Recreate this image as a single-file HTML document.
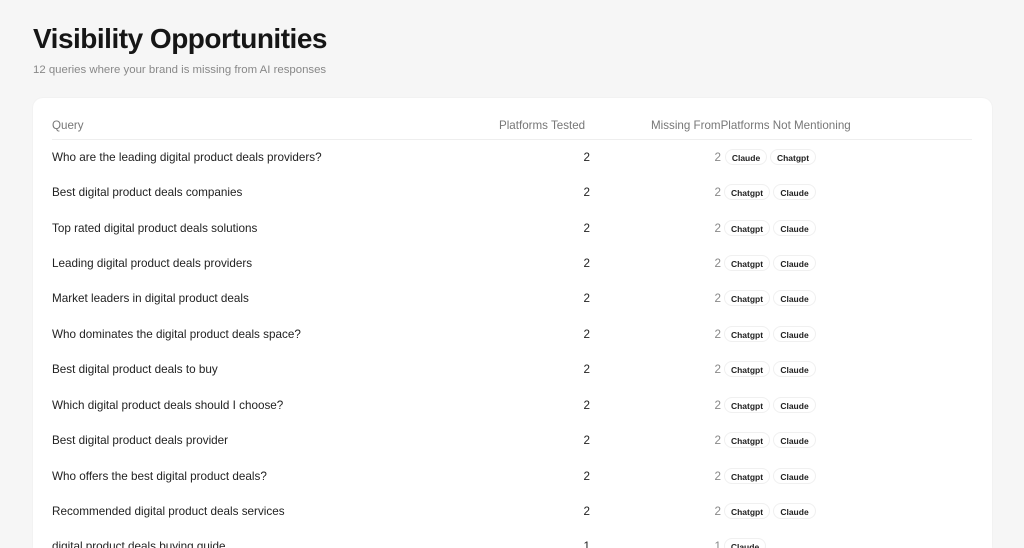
<!DOCTYPE html>
<html style="margin:0;width:1024px;height:548px;overflow:hidden"><head><style>
body{margin:0;width:1024px;height:548px;overflow:hidden;background:#f6f6f6;font-family:"Liberation Sans",sans-serif;color:#222;position:relative}
h1{position:absolute;left:33px;top:23px;margin:0;font-size:28px;font-weight:700;color:#161616;letter-spacing:-0.5px}
.sub{position:absolute;left:33px;top:64px;font-size:11.4px;color:#888}
.card{position:absolute;left:33px;top:98px;width:959px;height:450px;background:#fff;border-radius:10px 10px 0 0;box-shadow:0 0 2px rgba(0,0,0,.05)}
.hd{position:absolute;top:119px;font-size:11.6px;color:#777}
.line{position:absolute;left:52px;width:920px;height:1px;background:#eee}
.row{position:absolute;left:0;width:1024px;height:20px;font-size:11.7px;color:#222}
.q{position:absolute;left:52px;top:2px}
.t{position:absolute;left:540px;width:50px;text-align:right;top:2px}
.m{position:absolute;left:680px;width:41px;text-align:right;top:2px;color:#888}
.p{position:absolute;top:0;height:16px;line-height:16px;font-size:8.5px;font-weight:700;border:1px solid #f0f0f0;border-radius:9px;padding:0 5px;box-sizing:border-box;background:#fff;color:#222;text-align:center}
</style></head><body>
<h1>Visibility Opportunities</h1>
<div class="sub">12 queries where your brand is missing from AI responses</div>
<div class="card"></div>
<div class="hd" style="left:52px">Query</div>
<div class="hd" style="left:499px">Platforms Tested</div>
<div class="hd" style="left:651px">Missing FromPlatforms Not Mentioning</div>
<div class="line" style="top:139px"></div>
<div class="row" style="top:149px"><span class="q">Who are the leading digital product deals providers?</span><span class="t">2</span><span class="m">2</span><span class="p" style="left:725px;width:42px">Claude</span><span class="p" style="left:770px;width:46px">Chatgpt</span></div>
<div class="row" style="top:184px"><span class="q">Best digital product deals companies</span><span class="t">2</span><span class="m">2</span><span class="p" style="left:724px;width:46px">Chatgpt</span><span class="p" style="left:773px;width:43px">Claude</span></div>
<div class="row" style="top:220px"><span class="q">Top rated digital product deals solutions</span><span class="t">2</span><span class="m">2</span><span class="p" style="left:724px;width:46px">Chatgpt</span><span class="p" style="left:773px;width:43px">Claude</span></div>
<div class="row" style="top:255px"><span class="q">Leading digital product deals providers</span><span class="t">2</span><span class="m">2</span><span class="p" style="left:724px;width:46px">Chatgpt</span><span class="p" style="left:773px;width:43px">Claude</span></div>
<div class="row" style="top:290px"><span class="q">Market leaders in digital product deals</span><span class="t">2</span><span class="m">2</span><span class="p" style="left:724px;width:46px">Chatgpt</span><span class="p" style="left:773px;width:43px">Claude</span></div>
<div class="row" style="top:326px"><span class="q">Who dominates the digital product deals space?</span><span class="t">2</span><span class="m">2</span><span class="p" style="left:724px;width:46px">Chatgpt</span><span class="p" style="left:773px;width:43px">Claude</span></div>
<div class="row" style="top:361px"><span class="q">Best digital product deals to buy</span><span class="t">2</span><span class="m">2</span><span class="p" style="left:724px;width:46px">Chatgpt</span><span class="p" style="left:773px;width:43px">Claude</span></div>
<div class="row" style="top:397px"><span class="q">Which digital product deals should I choose?</span><span class="t">2</span><span class="m">2</span><span class="p" style="left:724px;width:46px">Chatgpt</span><span class="p" style="left:773px;width:43px">Claude</span></div>
<div class="row" style="top:432px"><span class="q">Best digital product deals provider</span><span class="t">2</span><span class="m">2</span><span class="p" style="left:724px;width:46px">Chatgpt</span><span class="p" style="left:773px;width:43px">Claude</span></div>
<div class="row" style="top:468px"><span class="q">Who offers the best digital product deals?</span><span class="t">2</span><span class="m">2</span><span class="p" style="left:724px;width:46px">Chatgpt</span><span class="p" style="left:773px;width:43px">Claude</span></div>
<div class="row" style="top:503px"><span class="q">Recommended digital product deals services</span><span class="t">2</span><span class="m">2</span><span class="p" style="left:724px;width:46px">Chatgpt</span><span class="p" style="left:773px;width:43px">Claude</span></div>
<div class="row" style="top:538px"><span class="q">digital product deals buying guide</span><span class="t">1</span><span class="m">1</span><span class="p" style="left:724px;width:42px">Claude</span></div>
</body></html>
